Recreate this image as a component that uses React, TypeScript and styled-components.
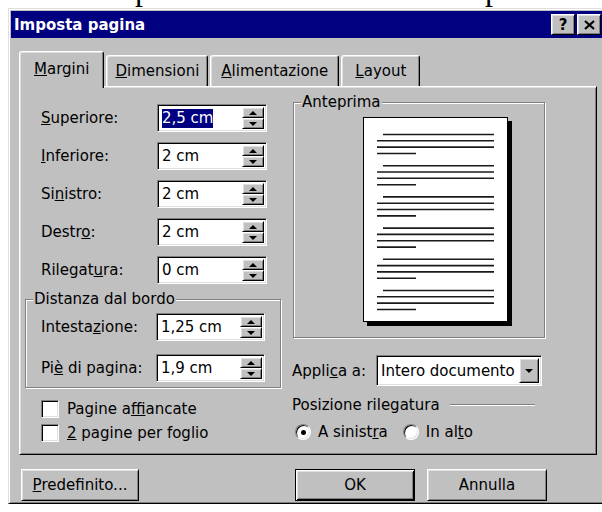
import styled, { createGlobalStyle, css } from "styled-components";

const GlobalStyle = createGlobalStyle`
  html, body {
    margin: 0;
    padding: 0;
    background: #fff;
    overflow: hidden;
  }
  body {
    font-family: "DejaVu Sans", "Noto Sans", sans-serif;
    font-size: 15px;
    color: #000;
  }
  u {
    text-underline-offset: 1px;
  }
`;

// classic 3d bevels
const raised = css`
  border: 1px solid;
  border-color: #fff #000 #000 #fff;
  box-shadow: inset 1px 1px #dfdfdf, inset -1px -1px #808080;
`;

const sunken = css`
  border: 1px solid;
  border-color: #808080 #fff #fff #808080;
  box-shadow: inset 1px 1px #000, inset -1px -1px #dfdfdf;
`;

const etched = css`
  border: 1px solid #808080;
  box-shadow: 1px 1px 0 #fff, inset 1px 1px 0 #fff;
`;

const TopStrip = styled.div`
  height: 8px;
  overflow: hidden;
`;

const StripLine = styled.div`
  display: flex;
  gap: 334px;
  padding-left: 135px;
  margin-top: -27px;
  font-family: "Liberation Serif", serif;
  font-size: 32px;
  line-height: 32px;
`;

const Dialog = styled.div`
  box-sizing: border-box;
  width: 598px;
  margin-left: 8px;
  padding: 2px;
  background: #c0c0c0;
  border: 1px solid;
  border-color: #dfdfdf #000 #000 #dfdfdf;
  box-shadow: inset 1px 1px #fff, inset -1px -1px #808080;
`;

const TitleBar = styled.div`
  display: flex;
  align-items: center;
  height: 27px;
  padding: 0 2px 0 3px;
  background: #000080;
`;

const Title = styled.div`
  flex: 1;
  color: #fff;
  font-weight: bold;
  font-size: 15px;
`;

const TitleButtons = styled.div`
  display: flex;
  gap: 2px;
`;

const TitleButton = styled.div`
  box-sizing: border-box;
  width: 24px;
  height: 21px;
  display: flex;
  align-items: center;
  justify-content: center;
  background: #c0c0c0;
  font-weight: bold;
  font-size: 15px;
  ${raised}
`;

const DialogBody = styled.div`
  padding: 13px 6px 0 8px;
`;

const TabRow = styled.div`
  display: flex;
  align-items: flex-end;
  height: 35px;
`;

const Tab = styled.div<{ $active?: boolean; $pad: number }>`
  box-sizing: border-box;
  display: flex;
  align-items: center;
  height: ${(p) => (p.$active ? 37 : 31)}px;
  margin-bottom: ${(p) => (p.$active ? -2 : 0)}px;
  margin-left: ${(p) => (p.$active ? 0 : 2)}px;
  padding: 0 ${(p) => p.$pad}px ${(p) => (p.$active ? 2 : 0)}px;
  position: relative;
  z-index: ${(p) => (p.$active ? 1 : 0)};
  background: #c0c0c0;
  border: 1px solid;
  border-color: #fff #000 transparent #fff;
  border-bottom: none;
  border-radius: 3px 3px 0 0;
  box-shadow: inset 1px 1px #dfdfdf, inset -1px 0 #808080;
`;

const Panel = styled.div`
  box-sizing: border-box;
  width: 578px;
  height: 369px;
  padding: 15px 0 0 5px;
  ${raised}
`;

const PanelGrid = styled.div`
  display: grid;
  grid-template-columns: 256px 252px;
  column-gap: 12px;
  align-items: start;
`;

const LeftCol = styled.div`
  display: flex;
  flex-direction: column;
  padding-top: 2px;
`;

const FieldList = styled.div`
  display: flex;
  flex-direction: column;
  gap: 10px;
  padding-left: 16px;
`;

const FieldRow = styled.div`
  display: flex;
  align-items: center;
  height: 28px;
`;

const FieldLabel = styled.span`
  width: 116px;
`;

const SpinBox = styled.div`
  box-sizing: border-box;
  width: 110px;
  height: 28px;
  display: flex;
  align-items: stretch;
  padding: 2px 2px 2px 4px;
  background: #fff;
  ${sunken}
`;

const SpinText = styled.div`
  flex: 1;
  display: flex;
  align-items: center;
`;

const SpinValue = styled.span<{ $selected?: boolean }>`
  line-height: 19px;
  background: ${(p) => (p.$selected ? "#000080" : "transparent")};
  color: ${(p) => (p.$selected ? "#fff" : "#000")};
`;

const SpinButtons = styled.div`
  display: flex;
  flex-direction: column;
  width: 22px;
`;

const arrow = (dir: "up" | "down") => css`
  &::after {
    content: "";
    border-left: 4px solid transparent;
    border-right: 4px solid transparent;
    ${dir === "up" ? "border-bottom" : "border-top"}: 4px solid #000;
  }
`;

const SpinButton = styled.div<{ $dir: "up" | "down" }>`
  flex: 1;
  display: flex;
  align-items: center;
  justify-content: center;
  background: #c0c0c0;
  ${raised}
  ${(p) => arrow(p.$dir)}
`;

const Group = styled.div`
  position: relative;
  box-sizing: border-box;
  ${etched}
`;

const Legend = styled.span`
  position: absolute;
  top: -10px;
  left: 7px;
  padding: 0 1px;
  line-height: 18px;
  background: #c0c0c0;
`;

const MarginGroup = styled(Group)`
  display: flex;
  flex-direction: column;
  gap: 13px;
  margin-top: 15px;
  padding: 13px 15px 5px;
`;

const CheckList = styled.div`
  display: flex;
  flex-direction: column;
  gap: 6px;
  margin-top: 12px;
  padding-left: 16px;
`;

const CheckRow = styled.div`
  display: flex;
  align-items: center;
  gap: 8px;
  height: 18px;
`;

const CheckBox = styled.span`
  box-sizing: border-box;
  width: 18px;
  height: 18px;
  background: #fff;
  ${sunken}
`;

const RightCol = styled.div`
  display: flex;
  flex-direction: column;
`;

const PreviewGroup = styled(Group)`
  height: 236px;
  padding: 14px 0 0 69px;
`;

const ApplyRow = styled.div`
  display: flex;
  align-items: center;
  margin: 17px 0 0 -1px;
`;

const ApplyLabel = styled.span`
  width: 84px;
`;

const Select = styled.div`
  box-sizing: border-box;
  width: 166px;
  height: 31px;
  display: flex;
  align-items: stretch;
  padding: 2px 2px 2px 4px;
  background: #fff;
  ${sunken}
`;

const SelectText = styled.span`
  flex: 1;
  display: flex;
  align-items: center;
`;

const DropButton = styled.div`
  width: 18px;
  display: flex;
  align-items: center;
  justify-content: center;
  background: #c0c0c0;
  ${raised}
  ${arrow("down")}
`;

const SectionHeader = styled.div`
  display: flex;
  align-items: center;
  gap: 10px;
  height: 18px;
  margin: 10px 10px 0 -1px;
`;

const Rule = styled.div`
  flex: 1;
  border-top: 1px solid #808080;
  border-bottom: 1px solid #fff;
`;

const RadioRow = styled.div`
  display: flex;
  align-items: center;
  gap: 15px;
  margin-top: 9px;
  padding-left: 2px;
`;

const RadioItem = styled.label`
  display: flex;
  align-items: center;
  gap: 7px;
`;

const Radio = styled.span<{ $checked?: boolean }>`
  box-sizing: border-box;
  width: 16px;
  height: 16px;
  display: flex;
  align-items: center;
  justify-content: center;
  border-radius: 50%;
  background: #fff;
  ${sunken}

  &::after {
    content: "";
    width: 5px;
    height: 5px;
    border-radius: 50%;
    background: ${(p) => (p.$checked ? "#000" : "transparent")};
  }
`;

const Footer = styled.div`
  display: flex;
  align-items: center;
  margin-top: 14px;
  padding-left: 2px;
`;

const Actions = styled.div`
  display: flex;
  gap: 12px;
  margin-left: auto;
  padding-right: 50px;
`;

const Button = styled.button<{ $default?: boolean; $width: number }>`
  box-sizing: border-box;
  width: ${(p) => p.$width}px;
  height: 32px;
  padding: 0;
  font-family: inherit;
  font-size: 15px;
  color: #000;
  background: #c0c0c0;
  ${(p) =>
    p.$default
      ? css`
          border: 1px solid #000;
          box-shadow: inset 1px 1px #fff, inset -1px -1px #000,
            inset 2px 2px #dfdfdf, inset -2px -2px #808080;
        `
      : raised}
`;

function Spinner({ value, selected }: { value: string; selected?: boolean }) {
  return (
    <SpinBox>
      <SpinText>
        <SpinValue $selected={selected}>{value}</SpinValue>
      </SpinText>
      <SpinButtons>
        <SpinButton $dir="up" />
        <SpinButton $dir="down" />
      </SpinButtons>
    </SpinBox>
  );
}

function PageThumb() {
  const blocks = [0, 1, 2, 3, 4, 5];
  return (
    <svg width="149" height="209" viewBox="0 0 149 209">
      <rect x="4" y="4" width="145" height="205" fill="#000" />
      <rect x="0.5" y="0.5" width="144" height="204" fill="#fff" stroke="#000" />
      {blocks.map((b) => {
        const y = 17.5 + b * 31.2;
        return (
          <g key={b} stroke="#1a1a1a" strokeWidth="1.6">
            <line x1="20" x2="131" y1={y} y2={y} />
            <line x1="14" x2="131" y1={y + 6.3} y2={y + 6.3} />
            <line x1="14" x2="131" y1={y + 12.6} y2={y + 12.6} />
            <line x1="14" x2="53" y1={y + 19} y2={y + 19} />
          </g>
        );
      })}
    </svg>
  );
}

export default function App() {
  return (
    <>
      <GlobalStyle />
      <TopStrip>
        <StripLine>
          <span>p</span>
          <span>p</span>
        </StripLine>
      </TopStrip>
      <Dialog>
        <TitleBar>
          <Title>Imposta pagina</Title>
          <TitleButtons>
            <TitleButton>?</TitleButton>
            <TitleButton>
              <svg width="11" height="10" viewBox="0 0 11 10">
                <path d="M1 1 L10 9 M10 1 L1 9" stroke="#000" strokeWidth="2.2" />
              </svg>
            </TitleButton>
          </TitleButtons>
        </TitleBar>

        <DialogBody>
          <TabRow>
            <Tab $active $pad={14}>
              <span><u>M</u>argini</span>
            </Tab>
            <Tab $pad={8}>
              <span><u>D</u>imensioni</span>
            </Tab>
            <Tab $pad={10}>
              <span><u>A</u>limentazione</span>
            </Tab>
            <Tab $pad={13}>
              <span><u>L</u>ayout</span>
            </Tab>
          </TabRow>

          <Panel>
            <PanelGrid>
              <LeftCol>
                <FieldList>
                  <FieldRow>
                    <FieldLabel><u>S</u>uperiore:</FieldLabel>
                    <Spinner value="2,5 cm" selected />
                  </FieldRow>
                  <FieldRow>
                    <FieldLabel><u>I</u>nferiore:</FieldLabel>
                    <Spinner value="2 cm" />
                  </FieldRow>
                  <FieldRow>
                    <FieldLabel>Si<u>n</u>istro:</FieldLabel>
                    <Spinner value="2 cm" />
                  </FieldRow>
                  <FieldRow>
                    <FieldLabel>Destr<u>o</u>:</FieldLabel>
                    <Spinner value="2 cm" />
                  </FieldRow>
                  <FieldRow>
                    <FieldLabel>Rilegat<u>u</u>ra:</FieldLabel>
                    <Spinner value="0 cm" />
                  </FieldRow>
                </FieldList>

                <MarginGroup>
                  <Legend>Distanza dal bordo</Legend>
                  <FieldRow>
                    <FieldLabel>Intesta<u>z</u>ione:</FieldLabel>
                    <Spinner value="1,25 cm" />
                  </FieldRow>
                  <FieldRow>
                    <FieldLabel>Pi<u>è</u> di pagina:</FieldLabel>
                    <Spinner value="1,9 cm" />
                  </FieldRow>
                </MarginGroup>

                <CheckList>
                  <CheckRow>
                    <CheckBox />
                    <span>Pagine a<u>f</u>fiancate</span>
                  </CheckRow>
                  <CheckRow>
                    <CheckBox />
                    <span><u>2</u> pagine per foglio</span>
                  </CheckRow>
                </CheckList>
              </LeftCol>

              <RightCol>
                <PreviewGroup>
                  <Legend>Anteprima</Legend>
                  <PageThumb />
                </PreviewGroup>

                <ApplyRow>
                  <ApplyLabel>Appli<u>c</u>a a:</ApplyLabel>
                  <Select>
                    <SelectText>Intero documento</SelectText>
                    <DropButton />
                  </Select>
                </ApplyRow>

                <SectionHeader>
                  <span>Posizione rilegatura</span>
                  <Rule />
                </SectionHeader>

                <RadioRow>
                  <RadioItem>
                    <Radio $checked />
                    <span>A sinist<u>r</u>a</span>
                  </RadioItem>
                  <RadioItem>
                    <Radio />
                    <span>In al<u>t</u>o</span>
                  </RadioItem>
                </RadioRow>
              </RightCol>
            </PanelGrid>
          </Panel>

          <Footer>
            <Button $width={118}>
              <u>P</u>redefinito...
            </Button>
            <Actions>
              <Button $default $width={120}>OK</Button>
              <Button $width={120}>Annulla</Button>
            </Actions>
          </Footer>
        </DialogBody>
      </Dialog>
    </>
  );
}
